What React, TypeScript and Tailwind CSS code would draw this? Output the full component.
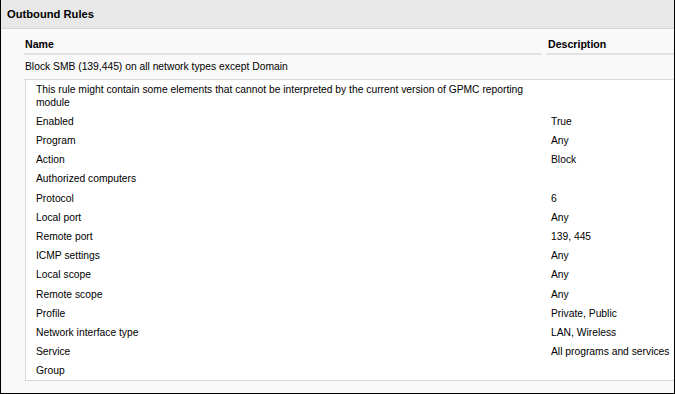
const rows: [string, string][] = [
  ['Enabled', 'True'],
  ['Program', 'Any'],
  ['Action', 'Block'],
  ['Authorized computers', ''],
  ['Protocol', '6'],
  ['Local port', 'Any'],
  ['Remote port', '139, 445'],
  ['ICMP settings', 'Any'],
  ['Local scope', 'Any'],
  ['Remote scope', 'Any'],
  ['Profile', 'Private, Public'],
  ['Network interface type', 'LAN, Wireless'],
  ['Service', 'All programs and services'],
  ['Group', ''],
];

export default function App() {
  return (
    <div
      className="w-[675px] h-[394px] overflow-hidden border-x border-b border-black bg-[#f9f9f9] text-[10.3px] text-black"
      style={{ fontFamily: '"Liberation Sans", Arial, sans-serif' }}
    >
      <div className="h-[29px] flex items-center pl-[6px] bg-[#e8e8e8] border-b border-[#d6d6d6] font-bold text-[11.2px]">
        Outbound Rules
      </div>

      <div className="pl-[23px]">
        <div className="grid grid-cols-[522px_1fr] h-[26px] items-end font-bold text-[10.6px] leading-[13px]">
          <div className="mr-[4px] pl-[1px] pb-[2px] border-b-2 border-[#e0e0e0]">Name</div>
          <div className="pl-[2px] pb-[2px] border-b-2 border-[#e0e0e0]">Description</div>
        </div>

        <div className="h-[25px] flex items-center pl-[1px] border-b border-[#dcdcdc]">
          Block SMB (139,445) on all network types except Domain
        </div>

        <div className="ml-[1px] h-[301px] bg-white border-l border-b border-[#d9d9d9] pt-[3px] pl-[10px]">
          <div className="w-[505px] leading-[13px] pb-[3px]">
            This rule might contain some elements that cannot be interpreted by the current version of GPMC reporting module
          </div>
          {rows.map(([k, v]) => (
            <div key={k} className="grid grid-cols-[515px_1fr] h-[19.2px] items-center whitespace-nowrap">
              <div>{k}</div>
              <div>{v}</div>
            </div>
          ))}
        </div>
      </div>
    </div>
  );
}
